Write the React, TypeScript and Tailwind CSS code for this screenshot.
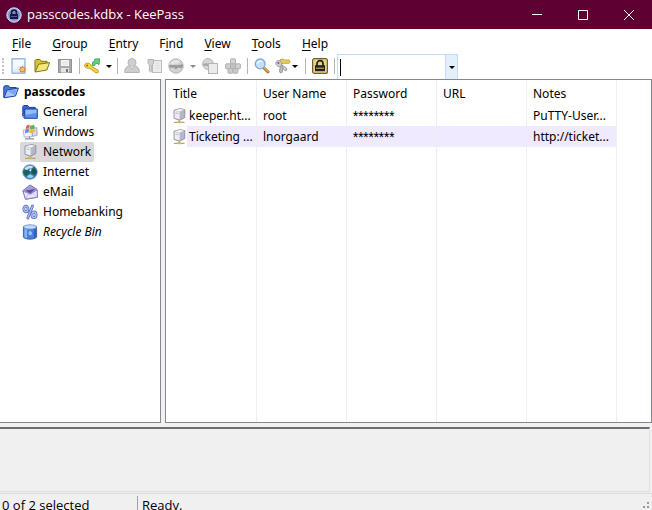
import type { ReactNode } from "react";

type IconProps = { children: ReactNode; className?: string };

function Icon({ children, className = "" }: IconProps) {
  return (
    <svg width="16" height="16" viewBox="0 0 16 16" className={"block shrink-0 " + className} aria-hidden="true">
      {children}
    </svg>
  );
}

function AppIcon() {
  return (
    <Icon>
      <circle cx="8" cy="8" r="7.2" fill="#a3b0ea" stroke="#d5daf6" strokeWidth="1" />
      <circle cx="8" cy="8" r="5.8" fill="#7c8cd4" />
      <path d="M5.6 7.5V5.4a2.4 2.4 0 0 1 4.8 0v2.1" fill="none" stroke="#141833" strokeWidth="1.6" />
      <rect x="4" y="7" width="8" height="5" rx=".6" fill="#171a30" />
      <path d="M5 9.5h6" stroke="#4d5a96" />
    </Icon>
  );
}

function NewIcon() {
  return (
    <Icon>
      <rect x="1" y=".8" width="13" height="14.4" fill="#dfecfc" stroke="#7ba2d6" />
      <path d="M2 2h11v4L2 12z" fill="#fff" opacity=".7" />
      <path d="M11.5 7.5l1 1.8 2-.8-.8 2 1.8 1-1.8 1 .8 2-2-.8-1 1.9-1-1.9-2 .8.8-2-1.8-1 1.8-1-.8-2 2 .8z" fill="#e0843c" />
      <circle cx="11.5" cy="11.5" r="1.8" fill="#ffc95a" />
    </Icon>
  );
}

function OpenIcon() {
  return (
    <Icon>
      <path d="M1 13.5V2.6L2 1.5h4l1.2 1.8H13v3" fill="#d8c335" stroke="#83751a" />
      <path d="M1.2 14l3.4-7.8L15.6 4.6 12.8 12z" fill="#f5e875" stroke="#83751a" strokeLinejoin="round" />
    </Icon>
  );
}

function SaveIcon() {
  return (
    <Icon>
      <rect x="1.5" y="1.5" width="13" height="13" fill="#a9a9a9" stroke="#929292" />
      <rect x="4" y="2" width="8" height="6" fill="#f5f5f5" />
      <path d="M5 4h6M5 6h6" stroke="#dcdcdc" />
      <rect x="4" y="10" width="8" height="4.5" fill="#e4e4e4" />
      <rect x="9" y="11" width="2" height="3" fill="#777" />
    </Icon>
  );
}

function AddKeyIcon() {
  return (
    <Icon>
      <path d="M.6 7.8C.4 5.6 3 4.5 5.2 5.5c1.5.6 2.2 1.7 1.9 2.6l7.2 4.3-.3 2.4-2.9-.2-1-1.4-1.4-.3-.7-1.2-2.8-1.5C2.9 10.6.8 9.5.6 7.8z" fill="#fbd93b" stroke="#b08a1c" strokeWidth=".8" />
      <circle cx="3.1" cy="7.5" r="1" fill="#8b6a10" />
      <path d="M8.2 7.4l.6-3.5L11 3l-.6-1.8 5.2-.5-.6 6-1.8-1.4-2.3.9-.3 1.6z" fill="#62d47c" stroke="#2f9b49" strokeWidth=".8" />
    </Icon>
  );
}

function UserIcon() {
  return (
    <Icon>
      <path d="M.8 14.5c-.3-4 1.3-5.8 4-6.3h6.4c2.7.5 4.3 2.3 4 6.3z" fill="#cdcdcd" stroke="#b4b4b4" />
      <circle cx="8" cy="4.6" r="4" fill="#d0d0d0" stroke="#b4b4b4" />
      <path d="M6 8.5l2 2.5 2-2.5" fill="#eee" stroke="#bdbdbd" />
    </Icon>
  );
}

function KeyPageIcon() {
  return (
    <Icon>
      <rect x="5.5" y="2.5" width="9" height="12" fill="#ececec" stroke="#bdbdbd" />
      <path d="M7.5 5h5M7.5 7.5h5M7.5 10h5" stroke="#dcdcdc" />
      <path d="M1 1.5h5.5v4L4.8 7v6l-1.2 1.2L2.4 13V7L1 5.5z" fill="#d2d2d2" stroke="#b2b2b2" />
    </Icon>
  );
}

function GreyGlobeIcon() {
  return (
    <Icon>
      <circle cx="8" cy="8" r="7.2" fill="#d2d2d2" stroke="#b4b4b4" />
      <path d="M2 5.5C4 2.3 8 1.3 12 2.8l-2 2.6H6.4L5 7.4z" fill="#e6e6e6" />
      <path d="M1 7.4c3-1.4 6 0 8-.2l6-1c.2 2-.4 3-1.4 4L10 9.6l-2 2-2.6-2L2 9.8z" fill="#9a9a9a" />
    </Icon>
  );
}

function CopyGlobeIcon() {
  return (
    <Icon>
      <circle cx="6" cy="6" r="5.4" fill="#d6d6d6" stroke="#b4b4b4" />
      <path d="M1 6c3-2 6 .5 10-1l-2 3H2z" fill="#a8a8a8" />
      <rect x="6.5" y="5.5" width="9" height="10" fill="#ebebeb" stroke="#b4b4b4" />
    </Icon>
  );
}

function AutoTypeIcon() {
  return (
    <Icon>
      <rect x="5.5" y=".8" width="5" height="5" rx=".8" fill="#d4d4d4" stroke="#b0b0b0" />
      <rect x=".6" y="5.8" width="5" height="5" rx=".8" fill="#cfcfcf" stroke="#b0b0b0" />
      <rect x="5.5" y="5.8" width="5" height="5" rx=".8" fill="#c2c2c2" stroke="#b0b0b0" />
      <rect x="10.4" y="5.8" width="5" height="5" rx=".8" fill="#cfcfcf" stroke="#b0b0b0" />
      <rect x="3" y="10.6" width="4.9" height="4.6" rx=".8" fill="#cacaca" stroke="#b0b0b0" />
      <rect x="8" y="10.6" width="4.9" height="4.6" rx=".8" fill="#cacaca" stroke="#b0b0b0" />
    </Icon>
  );
}

function SearchIcon() {
  return (
    <Icon>
      <path d="M9.8 9.8l4.2 4" stroke="#b3763f" strokeWidth="3" strokeLinecap="round" />
      <path d="M10 9.5l4 4" stroke="#e5aa69" strokeWidth="1.1" strokeLinecap="round" />
      <circle cx="6.2" cy="5.9" r="4.9" fill="#c4e0fb" stroke="#7da6dd" strokeWidth="1.3" />
      <path d="M3.3 5.5C4 3.2 6.5 2.6 8 3.5" fill="none" stroke="#fff" strokeWidth="1.4" />
    </Icon>
  );
}

function KeysIcon() {
  return (
    <Icon>
      <path d="M5 1.8C7 .5 9 1.2 9.5 2h4.7l.8 1.7-1 1.6H9.4C8 6.5 5 5.8 5 4z" fill="#efcc52" stroke="#b8953a" strokeWidth=".8" />
      <path d="M1 4.2C2 2 5.3 2.2 6.4 4c.7 1 .5 2-.1 2.7l5.2 3.5.4 2-2 .2-4.6-4C3 9.3.3 7 1 4.2z" fill="#cfcfcf" stroke="#8c8c8c" strokeWidth=".8" />
      <path d="M6 7.5l1.8 1.2-.6 5.6-1.8.6-1-1.5 1-5z" fill="#bdbdbd" stroke="#8c8c8c" strokeWidth=".8" />
      <circle cx="3.4" cy="5" r="1" fill="#666" />
    </Icon>
  );
}

function LockIcon() {
  return (
    <Icon>
      <rect x=".6" y=".6" width="14.8" height="14.8" rx="2" fill="#e6d28a" stroke="#6f5f2c" strokeWidth="1.2" />
      <path d="M5 8V5.6a3 3 0 0 1 6 0V8" fill="none" stroke="#24221c" strokeWidth="1.7" />
      <rect x="3" y="7.2" width="10" height="6" fill="#24221c" />
      <path d="M4 10.2h8" stroke="#d6c17a" />
    </Icon>
  );
}

function FolderOpenIcon() {
  return (
    <Icon>
      <path d="M.8 13.4V3l.9-1.2h3.8L6.8 3.6h6.4v2.2" fill="#4c79df" stroke="#173c9b" />
      <path d="M1 13.8L4 6l11.4-2-2.9 8z" fill="#a6c9fb" stroke="#1e45a5" strokeLinejoin="round" />
      <path d="M4.7 7.1l9-1.6-2 5.5z" fill="#76a5f2" />
    </Icon>
  );
}

function FolderIcon() {
  return (
    <Icon>
      <path d="M.8 12.5V2.6l1-1h4l1.2 1.8h6.2V6" fill="#3f68d2" stroke="#1b3da1" />
      <path d="M.8 12.6l2 1.8V5h12.5v9.3H2.8" fill="#5f93ee" stroke="#1d40a5" />
      <path d="M3.5 5.8h11v3L3.5 11z" fill="#94bdfa" />
    </Icon>
  );
}

function WindowsIcon() {
  return (
    <Icon>
      <path d="M1 6.2L9.5 4.6l1 7.6-8.2 1z" fill="#f2f2fa" stroke="#a3a4bf" strokeWidth=".8" />
      <path d="M9.8 4.6l5-1 .4 7.6-4.6 1.2z" fill="#d9d8e6" stroke="#9a9bb4" strokeWidth=".8" />
      <path d="M4.2 2.2C5.3 1 6.6.6 7.8 1L7.2 4.6C6 4.2 4.7 4.6 3.6 5.8z" fill="#e3604f" />
      <path d="M8.4 1.2c1.2.5 2.5.3 3.6-.8l.9 3.3c-1.2 1.2-3 1.7-5.1 1z" fill="#58b45a" />
      <path d="M3.4 6.4C4.5 5.2 5.8 4.9 7 5.3l-.6 3.4c-1.2-.4-2.5 0-3.6 1z" fill="#5784dc" />
      <path d="M7.6 5.4c1.6.6 3.6.3 5-1l.2 3.2c-1.2 1.2-3.4 1.8-5.8 1.1z" fill="#e9b93e" />
      <path d="M7.5 12.8v1.7M3 14.8h9" stroke="#8d8e9f" strokeWidth="1.2" />
    </Icon>
  );
}

function ServerIcon() {
  return (
    <Icon>
      <path d="M3 2.2L9.2.6l4.6 1v8L8.7 12.2 3 10.4z" fill="#b6b7c6" stroke="#85879b" strokeWidth=".8" />
      <path d="M3.6 2.7l5 1.3v7.4l-5-1.4z" fill="#ececf5" />
      <path d="M3.6 2.3L9.2 1l4 .8-4.6 1.7z" fill="#f7f7fc" />
      <path d="M4.5 4.8l3 .8" stroke="#b6b7c8" />
      <path d="M8.2 12v1.6M3 14.3h10.5" stroke="#b8a566" strokeWidth="1.3" />
      <path d="M6.5 13.2h3.6v2H6.5z" fill="#cdb768" />
    </Icon>
  );
}

function GlobeIcon() {
  return (
    <Icon>
      <circle cx="8" cy="8" r="7.3" fill="#2f74b0" stroke="#93a4b8" strokeWidth=".9" />
      <path d="M2.4 5C4.2 2 8 1.2 11.4 2.4L9.6 4.6 6.8 4.4 5 6.2z" fill="#c9e6f4" />
      <path d="M1 7.4l3.2-1.6 3.6 1-.7 2.4-2.2 2.4C2.6 11.4 1.2 9.6 1 7.4z" fill="#1f6150" />
      <path d="M9 6.2l3-2.2 2.8 2.4-.2 3-2.4 1.6L10.4 9.4 8.6 8.2z" fill="#1b574d" />
      <path d="M4.6 12.2l3.6-2 3.6 2c-1.6 2.4-5.4 2.6-7.2 0z" fill="#8ed0ef" />
      <path d="M7 6.4l2-1.6.4 2.8z" fill="#f0fbff" />
    </Icon>
  );
}

function MailIcon() {
  return (
    <Icon>
      <path d="M.8 6.8L8 .9l7 4.4.5 8-12 2z" fill="#a79dde" stroke="#7468b8" strokeWidth=".9" strokeLinejoin="round" />
      <path d="M1 7l7.4 3.2 6.6-4.4.4 7.4-11.8 1.8z" fill="#e9e5fc" stroke="#8479c6" strokeWidth=".8" />
      <path d="M3 6.6l10.4-1.6-5 4.4z" fill="#5d5291" />
      <path d="M3.6 14.4l3-4.6M15 13l-4.6-4" stroke="#b8b0e4" strokeWidth=".7" />
    </Icon>
  );
}

function PercentIcon() {
  return (
    <Icon>
      <g fill="none" strokeLinecap="round">
        <path d="M10.5 2L5.8 14" stroke="#5568bd" strokeWidth="2.8" />
        <ellipse cx="3.9" cy="5" rx="2.1" ry="2.8" stroke="#5568bd" strokeWidth="2.8" />
        <ellipse cx="12" cy="10.8" rx="2.1" ry="2.8" stroke="#5568bd" strokeWidth="2.8" />
        <path d="M10.5 2L5.8 14" stroke="#b0c1f8" strokeWidth="1.2" />
        <ellipse cx="3.9" cy="5" rx="2.1" ry="2.8" stroke="#b0c1f8" strokeWidth="1.3" />
        <ellipse cx="12" cy="10.8" rx="2.1" ry="2.8" stroke="#b0c1f8" strokeWidth="1.3" />
      </g>
    </Icon>
  );
}

function BinIcon() {
  return (
    <Icon>
      <path d="M1.4 2.8v10.4c2 2.6 11.2 2.6 13.2 0V2.8z" fill="#4a80d8" stroke="#2f5cae" strokeWidth=".9" />
      <path d="M2.4 4.4v8.4c.8.8 1.6 1.2 2.6 1.4V5z" fill="#86b4f2" />
      <path d="M12 5l-.2 9.2c.9-.2 1.7-.7 2.3-1.4V4.2z" fill="#2f62c0" />
      <ellipse cx="8" cy="3" rx="6.6" ry="2.2" fill="#c3dbf8" stroke="#5c86cc" strokeWidth=".8" />
      <path d="M6.4 8.4L8 6.8l2 1.4-.2 2.6-2.6.4z" fill="#9cc4f8" />
    </Icon>
  );
}

function Caret({ color }: { color: string }) {
  return (
    <svg width="6" height="3" viewBox="0 0 6 3" className="block shrink-0" aria-hidden="true">
      <path d="M0 0h6L3 3z" fill={color} />
    </svg>
  );
}

function ToolButton({ label, children }: { label: string; children: ReactNode }) {
  return (
    <button type="button" aria-label={label} className="flex h-6 w-[23px] items-center justify-center">
      {children}
    </button>
  );
}

function DropButton({ label, color, compact, children }: { label: string; color: string; compact?: boolean; children: ReactNode }) {
  return (
    <button
      type="button"
      aria-label={label}
      className={"flex h-6 items-center pl-0.5 " + (compact ? "w-[29px] gap-px" : "w-8 gap-1.5")}
    >
      {children}
      <Caret color={color} />
    </button>
  );
}

function Separator() {
  return <span className="mt-1 mr-0.5 ml-[3px] h-4 w-px bg-[#b4b4b4]" />;
}

const menus = ["File", "Group", "Entry", "Find", "View", "Tools", "Help"];

function MenuLabel({ text }: { text: string }) {
  const at = text === "Find" ? 1 : 0;
  return (
    <>
      {text.slice(0, at)}
      <span className="underline underline-offset-2">{text[at]}</span>
      {text.slice(at + 1)}
    </>
  );
}

const groups = [
  { name: "General", icon: <FolderIcon /> },
  { name: "Windows", icon: <WindowsIcon /> },
  { name: "Network", icon: <ServerIcon />, selected: true },
  { name: "Internet", icon: <GlobeIcon /> },
  { name: "eMail", icon: <MailIcon /> },
  { name: "Homebanking", icon: <PercentIcon /> },
  { name: "Recycle Bin", icon: <BinIcon />, italic: true },
];

const columns = ["Title", "User Name", "Password", "URL", "Notes"];

const entries = [
  { title: "keeper.ht...", user: "root", notes: "PuTTY-User...", tinted: false },
  { title: "Ticketing ...", user: "lnorgaard", notes: "http://ticket...", tinted: true },
];

const cell = "overflow-hidden border-r border-[#ededf2] p-0 text-left font-normal whitespace-nowrap";

export default function App() {
  return (
    <div className="flex h-screen flex-col overflow-hidden bg-[#f0f0f0] font-['Noto_Sans',sans-serif] text-xs text-black">
      <header className="flex h-[29px] shrink-0 items-center bg-[#5e0031] pl-1.5 text-white">
        <AppIcon />
        <h1 className="grow pl-[5px] font-['Open_Sans',sans-serif] text-[13px]">passcodes.kdbx - KeePass</h1>
        <button type="button" aria-label="Minimize" className="flex h-full w-[46px] items-center justify-center">
          <svg width="10" height="10" aria-hidden="true"><path d="M0 4.5h10" stroke="#fff" /></svg>
        </button>
        <button type="button" aria-label="Maximize" className="flex h-full w-[46px] items-center justify-center">
          <svg width="10" height="10" aria-hidden="true"><path d="M.5.5h9v9h-9z" fill="none" stroke="#fff" /></svg>
        </button>
        <button type="button" aria-label="Close" className="flex h-full w-[46px] items-center justify-center">
          <svg width="10" height="10" aria-hidden="true"><path d="M0 0l10 10M10 0L0 10" stroke="#fff" /></svg>
        </button>
      </header>

      <nav className="flex h-[25px] shrink-0 items-end gap-[21px] bg-white pl-3">
        {menus.map((m) => (
          <button key={m} type="button" className="h-[21px] leading-4">
            <MenuLabel text={m} />
          </button>
        ))}
      </nav>

      <div className="flex h-[25px] shrink-0 items-start bg-white">
        <span className="mt-1 mr-[3px] ml-0.5 h-4 w-0.5 border-l-2 border-dotted border-[#c2c2c2]" />
        <ToolButton label="New"><NewIcon /></ToolButton>
        <ToolButton label="Open"><OpenIcon /></ToolButton>
        <ToolButton label="Save"><SaveIcon /></ToolButton>
        <Separator />
        <DropButton label="Add entry" color="#000"><AddKeyIcon /></DropButton>
        <Separator />
        <ToolButton label="Copy user name"><UserIcon /></ToolButton>
        <ToolButton label="Copy password"><KeyPageIcon /></ToolButton>
        <DropButton label="Open URL" color="#8a8a8a"><GreyGlobeIcon /></DropButton>
        <ToolButton label="Copy URL"><CopyGlobeIcon /></ToolButton>
        <ToolButton label="Perform auto-type"><AutoTypeIcon /></ToolButton>
        <Separator />
        <ToolButton label="Find"><SearchIcon /></ToolButton>
        <DropButton label="Show entries" color="#000" compact><KeysIcon /></DropButton>
        <Separator />
        <ToolButton label="Lock workspace"><LockIcon /></ToolButton>
        <Separator />
        <div className="flex h-full w-[121px] border border-b-0 border-[#c5dcf3] bg-white">
          <div className="flex grow items-center pl-0.5">
            <span className="h-[17px] w-px bg-black" />
            <input aria-label="Quick find" className="w-full min-w-0 outline-none" />
          </div>
          <button type="button" aria-label="Search history" className="flex w-3 shrink-0 items-center justify-center border-l border-[#c5dcf3] bg-[#e3effb]">
            <Caret color="#000" />
          </button>
        </div>
      </div>

      <main className="flex min-h-0 grow gap-1">
        <nav aria-label="Groups" className="w-[161px] shrink-0 border-y border-r border-[#828790] bg-white pt-0.5 pl-[3px]">
          <div className="flex h-5 items-center gap-[5px] font-bold">
            <FolderOpenIcon />
            passcodes
          </div>
          <ul className="flex flex-col items-start pl-[17px]">
            {groups.map((g) => (
              <li key={g.name}>
                <button
                  type="button"
                  className={
                    "flex h-5 items-center gap-[5px] rounded-xs pr-[3px] pl-0.5 " +
                    (g.selected ? "bg-[#d9d9d9] " : "") +
                    (g.italic ? "italic" : "")
                  }
                >
                  {g.icon}
                  {g.name}
                </button>
              </li>
            ))}
          </ul>
        </nav>

        <section className="min-w-0 grow border border-[#828790] bg-white pl-px">
          <table className="h-full w-full table-fixed border-separate border-spacing-0">
            <colgroup>
              {columns.map((c) => (
                <col key={c} className="w-[90px]" />
              ))}
              <col />
            </colgroup>
            <thead>
              <tr className="h-[25px]">
                {columns.map((c) => (
                  <th key={c} scope="col" className={cell + " pt-[3px]"}>
                    <span className="pl-1.5">{c}</span>
                  </th>
                ))}
                <td />
              </tr>
            </thead>
            <tbody>
              {entries.map((e) => (
                <tr key={e.title} className="h-[21px]">
                  <td className={cell}>
                    <div className="flex h-[21px] items-center pl-1">
                      <ServerIcon />
                      <span className={"h-full grow pl-0.5 leading-[22px] " + (e.tinted ? "bg-[#efeaff]" : "")}>{e.title}</span>
                    </div>
                  </td>
                  <td className={cell + (e.tinted ? " bg-[#efeaff]" : "")}>
                    <span className="pl-1.5">{e.user}</span>
                  </td>
                  <td className={cell + (e.tinted ? " bg-[#efeaff]" : "")}>
                    <span className="pl-1.5 font-[Roboto,sans-serif]">********</span>
                  </td>
                  <td className={cell + (e.tinted ? " bg-[#efeaff]" : "")} />
                  <td className={cell + (e.tinted ? " bg-[#efeaff]" : "")}>
                    <span className="pl-1.5">{e.notes}</span>
                  </td>
                  <td />
                </tr>
              ))}
              <tr>
                {columns.map((c) => (
                  <td key={c} className={cell} />
                ))}
                <td />
              </tr>
            </tbody>
          </table>
        </section>
      </main>

      <section aria-label="Entry details" className="mt-1 mr-0.5 h-[65px] shrink-0 border-t-2 border-r border-b border-t-[#6e6e6e] border-r-[#e0e0e0] border-b-[#dcdcdc]" />

      <footer className="mt-px flex h-[17px] shrink-0 items-start border-t border-[#dadada] font-['Open_Sans',sans-serif] text-[13px] leading-[22px]">
        <span className="w-[137px] shrink-0 pl-0.5">0 of 2 selected</span>
        <span className="mt-0.5 h-4 w-px bg-[#a0a0a0]" />
        <span className="grow pl-1">Ready.</span>
        <svg width="8" height="16" className="mr-0.5 shrink-0" aria-hidden="true">
          <path d="M5 8h2v2H5zM1 12h2v2H1zM5 12h2v2H5z" fill="#9a9a9a" />
        </svg>
      </footer>
    </div>
  );
}
